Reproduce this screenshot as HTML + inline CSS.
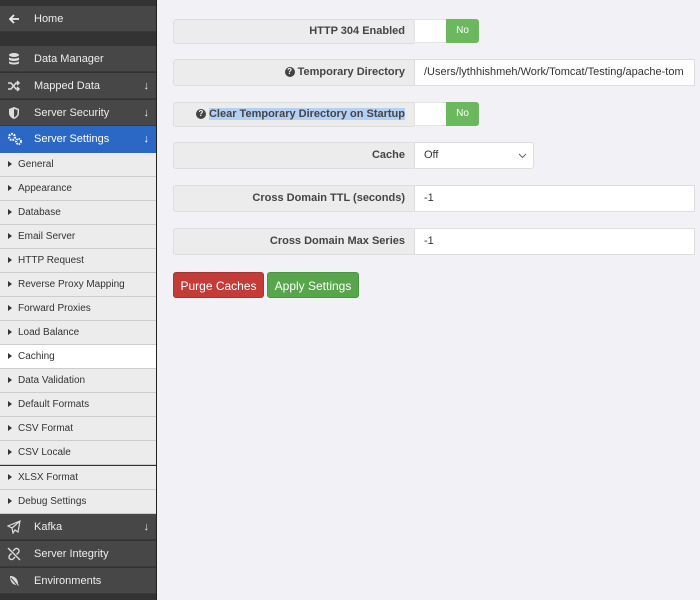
<!DOCTYPE html>
<html><head><style>
*{box-sizing:border-box;margin:0;padding:0}
body{width:700px;height:600px;overflow:hidden;background:#f2f2f6;font-family:"Liberation Sans",sans-serif;position:relative}
#sb{position:absolute;left:0;top:0;width:157px;height:600px;background:#333;border-right:1px solid #222}
.m{position:absolute;left:0;width:156px;height:26px;background:#474747;color:#eee;font-size:11px;line-height:26px;padding-left:34px;border-bottom:1px solid #3a3a3a}
.m svg{position:absolute;left:7px;top:6px}
.m .ar{position:absolute;right:7px;top:0;font-size:11px}
.s{position:absolute;left:0;width:156px;height:24px;background:#ececec;border-bottom:1px solid #ccc;font-size:10px;line-height:23px;color:#333;padding-left:18px}
.s:before{content:"";position:absolute;left:8px;top:8px;border-left:4px solid #333;border-top:3.5px solid transparent;border-bottom:3.5px solid transparent}
.row{position:absolute;left:173px;height:25px;background:#ececec;border:1px solid #ddd;border-radius:3px;font-size:11px;font-weight:bold;color:#444;text-align:right;padding-right:9px;line-height:23px;width:242px}
.q{display:inline-block;width:10px;height:10px;border-radius:50%;background:#444;color:#fff;font-size:8px;line-height:10px;text-align:center;vertical-align:1px;margin-right:3px}
.inp{position:absolute;left:414px;height:27px;background:#fff;border:1px solid #ddd;font-size:11px;color:#333;line-height:25px;padding-left:9px;overflow:hidden;white-space:nowrap}
.tg{position:absolute;left:414px;width:65px;height:24px;background:#fff;border-radius:0 3px 3px 0;border:1px solid #e4e4e4}
.tg span{position:absolute;right:-1px;top:-1px;width:33px;height:24px;background:#6bb85e;color:#fff;font-size:10px;line-height:24px;text-align:center;border-radius:0 3px 3px 0}
.btn{position:absolute;top:272px;height:26px;color:#fff;font-size:12px;line-height:26px;text-align:center;border-radius:3px}
</style></head><body>
<div id="sb">
<div class="m" style="top:6px"><svg width="14" height="14" viewBox="0 0 14 14"><path d="M12 7H3M7 3L3 7l4 4" stroke="#eee" stroke-width="1.8" fill="none"/></svg>Home</div>
<div class="m" style="top:46px"><svg width="14" height="14" viewBox="0 0 14 14"><ellipse cx="7" cy="3" rx="5" ry="2" fill="#ddd"/><path d="M2 5c0 2 10 2 10 0v2.5c0 2-10 2-10 0zM2 9c0 2 10 2 10 0v2c0 2-10 2-10 0z" fill="#ddd"/></svg>Data Manager</div>
<div class="m" style="top:73px"><svg width="14" height="14" viewBox="0 0 14 14"><path d="M1 4h3l5 6h3M1 10h3l5-6h3M10 2l2 2-2 2M10 8l2 2-2 2" stroke="#ddd" stroke-width="1.5" fill="none"/></svg>Mapped Data<span class="ar">&#8595;</span></div>
<div class="m" style="top:100px"><svg width="14" height="14" viewBox="0 0 14 14"><path d="M7 1l5 2v4c0 3-2.5 5-5 6-2.5-1-5-3-5-6V3z" fill="#ddd"/><path d="M7 3v8.5c1.8-.8 3.5-2.3 3.5-4.5V4z" fill="#474747"/></svg>Server Security<span class="ar">&#8595;</span></div>
<div class="m" style="top:126px;background:#2b68c6;color:#fff;height:27px;border:none"><svg width="16" height="14" viewBox="0 0 16 14"><circle cx="5" cy="5" r="3" fill="none" stroke="#fff" stroke-width="2.2" stroke-dasharray="1.6 1"/><circle cx="11.5" cy="9.5" r="2.5" fill="none" stroke="#fff" stroke-width="2" stroke-dasharray="1.4 0.9"/></svg>Server Settings<span class="ar">&#8595;</span></div>
<div class="s" style="top:153px">General</div>
<div class="s" style="top:177px">Appearance</div>
<div class="s" style="top:201px">Database</div>
<div class="s" style="top:225px">Email Server</div>
<div class="s" style="top:249px">HTTP Request</div>
<div class="s" style="top:273px">Reverse Proxy Mapping</div>
<div class="s" style="top:297px">Forward Proxies</div>
<div class="s" style="top:321px">Load Balance</div>
<div class="s" style="top:345px;background:#fff">Caching</div>
<div class="s" style="top:369px">Data Validation</div>
<div class="s" style="top:393px">Default Formats</div>
<div class="s" style="top:417px">CSV Format</div>
<div class="s" style="top:441px">CSV Locale</div>
<div class="s" style="top:466px">XLSX Format</div>
<div class="s" style="top:490px">Debug Settings</div>
<div class="m" style="top:514px"><svg width="14" height="14" viewBox="0 0 14 14"><path d="M13 1L1 6l4 2 1 5 2-3 3 2z M5 8l8-7" stroke="#ddd" stroke-width="1.2" fill="none"/></svg>Kafka<span class="ar">&#8595;</span></div>
<div class="m" style="top:541px"><svg width="14" height="14" viewBox="0 0 14 14"><path d="M6 4l2-2a2.5 2.5 0 013.5 3.5l-2 2M8 10l-2 2a2.5 2.5 0 01-3.5-3.5l2-2M1 1l12 12" stroke="#ddd" stroke-width="1.4" fill="none"/></svg>Server Integrity</div>
<div class="m" style="top:568px"><svg width="14" height="14" viewBox="0 0 14 14"><path d="M3 2c5 0 8 3 8 8l1 2-2-1C5 11 3 7 3 2z" fill="#ddd"/><path d="M4 4l6 7" stroke="#474747"/></svg>Environments</div>
</div>

<div class="row" style="top:19px">HTTP 304 Enabled</div>
<div class="tg" style="top:19px"><span>No</span></div>
<div class="row" style="top:59px;height:27px;line-height:25px"><span class="q">?</span>Temporary Directory</div>
<div class="inp" style="top:59px;width:281px">/Users/lythhishmeh/Work/Tomcat/Testing/apache-tom</div>
<div class="row" style="top:102px"><span class="q">?</span><span style="background:#b4d0f5">Clear Temporary Directory on Startup</span></div>
<div class="tg" style="top:102px"><span>No</span></div>
<div class="row" style="top:142px;height:27px;line-height:25px">Cache</div>
<div class="inp" style="top:142px;width:120px;border-radius:0 3px 3px 0">Off<svg style="position:absolute;right:6px;top:10px" width="9" height="6" viewBox="0 0 9 6"><path d="M1 1l3.5 3.5L8 1" stroke="#666" fill="none"/></svg></div>
<div class="row" style="top:185px;height:27px;line-height:25px">Cross Domain TTL (seconds)</div>
<div class="inp" style="top:185px;width:281px">-1</div>
<div class="row" style="top:228px;height:27px;line-height:25px">Cross Domain Max Series</div>
<div class="inp" style="top:228px;width:281px">-1</div>
<div class="btn" style="left:173px;width:91px;background:#c43c37;border:1px solid #a33">Purge Caches</div>
<div class="btn" style="left:267px;width:92px;background:#58a64c;border:1px solid #4a9540">Apply Settings</div>
</body></html>
